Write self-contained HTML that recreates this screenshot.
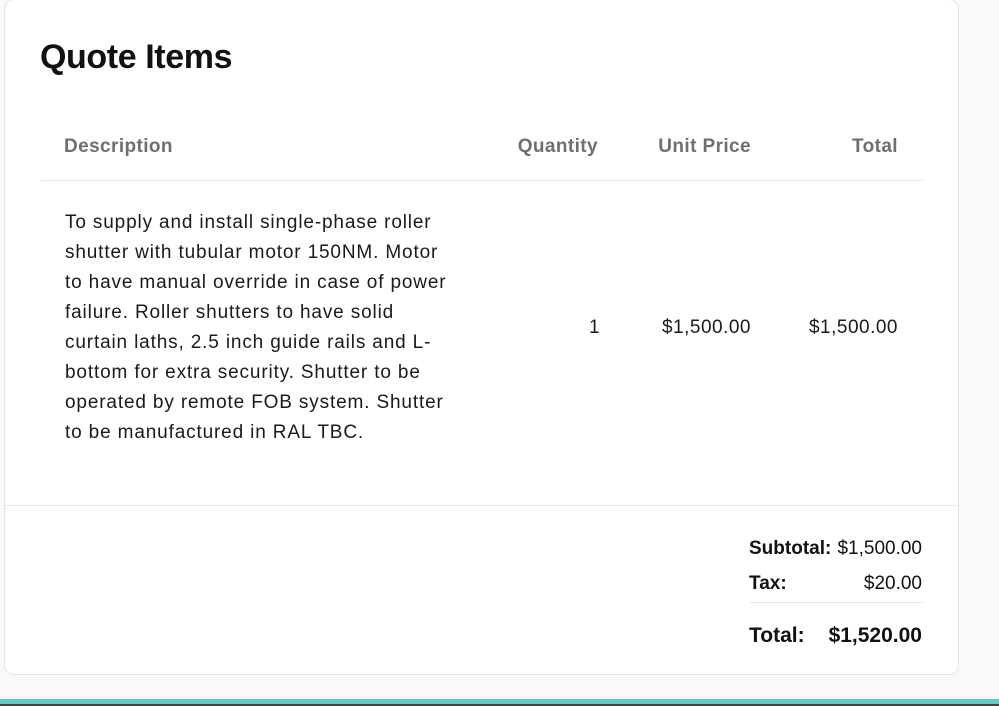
<!DOCTYPE html>
<html><head><style>
*{margin:0;padding:0;box-sizing:border-box}
body{width:999px;height:706px;background:#f8f9fb;font-family:"Liberation Sans",sans-serif;position:relative;overflow:hidden;color:#111}
.card{position:absolute;left:4px;top:-1px;width:955px;height:676px;background:#fff;border:1px solid #e4e4e7;border-radius:10px}
.a{position:absolute;white-space:nowrap}
h1{position:absolute;left:35px;top:38px;font-size:34px;font-weight:600;letter-spacing:-0.4px;color:#111}
.th{font-size:19px;color:#6f6f6f;font-weight:bold;top:136px;letter-spacing:0.4px}
.hr{position:absolute;height:1px;background:#e5e5e5}
.desc{left:60px;top:208px;font-size:19px;line-height:30px;color:#1a1a1a;letter-spacing:0.85px}
.num{font-size:19px;top:317px;color:#1a1a1a;letter-spacing:0.5px}
.bar{position:absolute;left:0;top:699px;width:999px;height:5px;background:#5fcdc5}
.bar2{position:absolute;left:0;top:704px;width:999px;height:2px;background:#444}
</style></head><body>
<div class="card">
<h1>Quote Items</h1>
<div class="a th" style="left:59px">Description</div>
<div class="a th" style="right:360px">Quantity</div>
<div class="a th" style="right:207px">Unit Price</div>
<div class="a th" style="right:60px">Total</div>
<div class="hr" style="left:36px;top:180px;width:882px"></div>
<div class="a desc">To supply and install single-phase roller<br>shutter with tubular motor 150NM. Motor<br>to have manual override in case of power<br>failure. Roller shutters to have solid<br>curtain laths, 2.5 inch guide rails and L-<br>bottom for extra security. Shutter to be<br>operated by remote FOB system. Shutter<br>to be manufactured in RAL TBC.</div>
<div class="a num" style="left:584px">1</div>
<div class="a num" style="right:207px">$1,500.00</div>
<div class="a num" style="right:60px">$1,500.00</div>
<div class="hr" style="left:0;top:505px;width:953px"></div>
<div class="a" style="left:744px;top:538px;font-size:19px;font-weight:bold">Subtotal:</div>
<div class="a" style="right:36px;top:538px;font-size:19px">$1,500.00</div>
<div class="a" style="left:744px;top:573px;font-size:19px;font-weight:bold">Tax:</div>
<div class="a" style="right:36px;top:573px;font-size:19px">$20.00</div>
<div class="hr" style="left:745px;top:602px;width:173px"></div>
<div class="a" style="left:744px;top:624px;font-size:21px;font-weight:bold">Total:</div>
<div class="a" style="right:36px;top:624px;font-size:21px;font-weight:bold">$1,520.00</div>
</div>
<div class="bar"></div><div class="bar2"></div>
</body></html>
